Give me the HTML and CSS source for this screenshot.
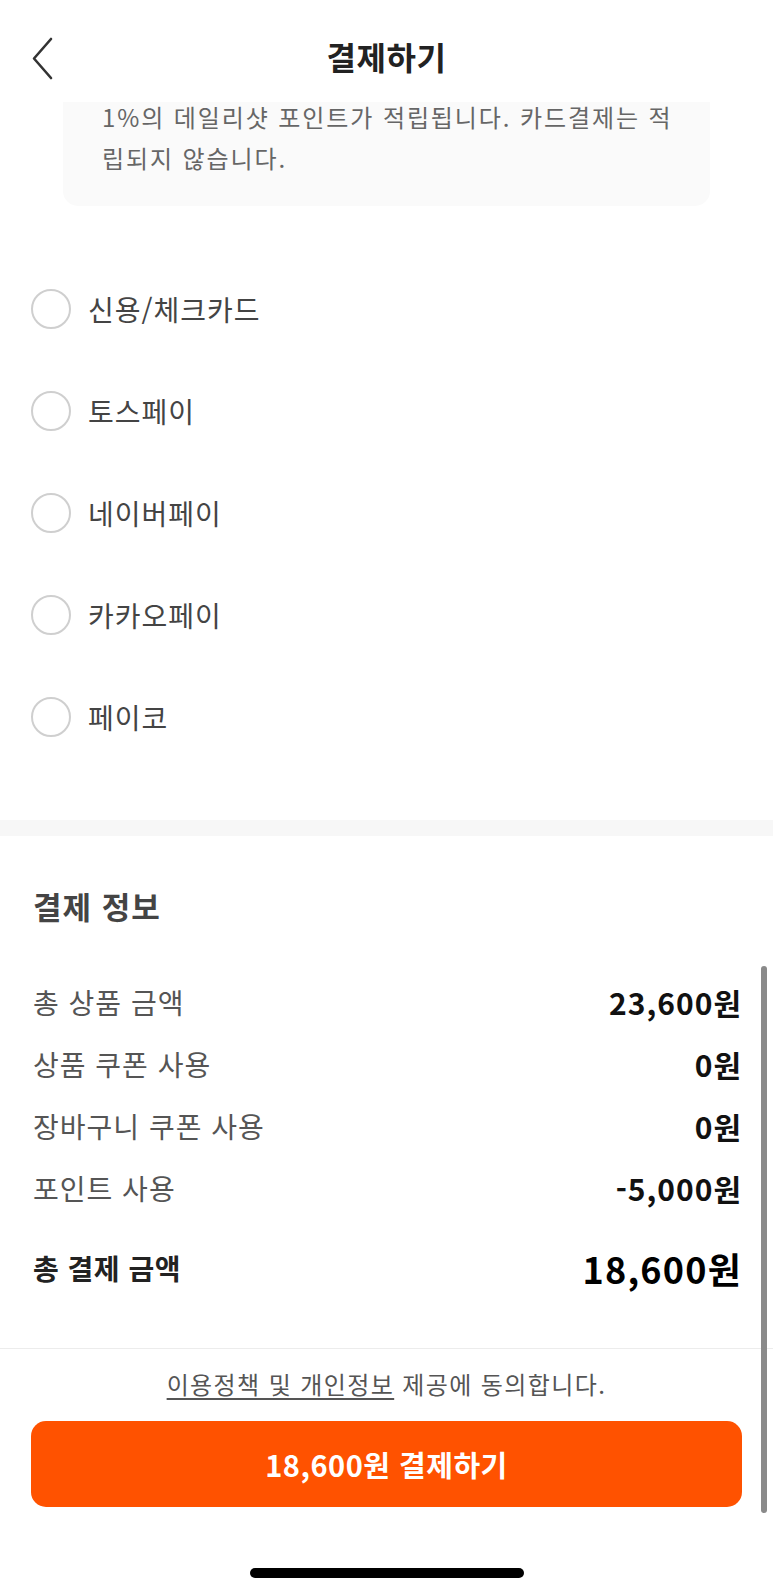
FILE: index.html
```html
<!DOCTYPE html>
<html lang="ko">
<head>
<meta charset="utf-8">
<title>결제하기</title>
<link rel="stylesheet" href="styles.css">
</head>
<body>
<div class="page">
  <header class="topbar">
    <svg class="back" width="24" height="44" viewBox="0 0 24 44">
      <path d="M20 2 L3 21.5 L20 41" fill="none" stroke="#333" stroke-width="2.6" stroke-linecap="round" stroke-linejoin="round"/>
    </svg>
    <h1 class="title">결제하기</h1>
  </header>

  <div class="notice">
    <p>1%의 데일리샷 포인트가 적립됩니다. 카드결제는 적<br>립되지 않습니다.</p>
  </div>

  <ul class="methods">
    <li class="method"><span class="radio"></span><span class="method-label">신용/체크카드</span></li>
    <li class="method"><span class="radio"></span><span class="method-label">토스페이</span></li>
    <li class="method"><span class="radio"></span><span class="method-label">네이버페이</span></li>
    <li class="method"><span class="radio"></span><span class="method-label">카카오페이</span></li>
    <li class="method"><span class="radio"></span><span class="method-label">페이코</span></li>
  </ul>

  <div class="band"></div>

  <section class="summary">
    <h2 class="summary-title">결제 정보</h2>
    <div class="row"><span class="row-label">총 상품 금액</span><span class="row-value">23,600원</span></div>
    <div class="row"><span class="row-label">상품 쿠폰 사용</span><span class="row-value">0원</span></div>
    <div class="row"><span class="row-label">장바구니 쿠폰 사용</span><span class="row-value">0원</span></div>
    <div class="row"><span class="row-label">포인트 사용</span><span class="row-value">-5,000원</span></div>
    <div class="row total"><span class="row-label">총 결제 금액</span><span class="row-value">18,600원</span></div>
  </section>

  <footer class="footer">
    <p class="agree"><span class="link">이용정책 및 개인정보</span> 제공에 동의합니다.</p>
    <button class="pay">18,600원 결제하기</button>
    <div class="home-bar"></div>
  </footer>

  <div class="scrollbar"></div>
</div>
</body>
</html>
```

FILE: styles.css
```css
* { box-sizing: border-box; }
html, body { margin: 0; padding: 0; background: #fff; }
body {
  font-family: "Noto Sans CJK KR", "Noto Sans", sans-serif;
  color: #222;
}
.page {
  position: relative;
  width: 773px;
  height: 1587px;
  overflow: hidden;
}
.topbar {
  position: relative;
  z-index: 2;
  height: 102px;
  background: #fff;
  padding-top: 13px;
}
.topbar .back {
  position: absolute;
  left: 31px;
  top: 37px;
}
.title {
  margin: 0;
  height: 86px;
  line-height: 86px;
  text-align: center;
  font-size: 32px;
  font-weight: 700;
  letter-spacing: 0.5px;
  color: #222;
}
.notice {
  position: relative;
  z-index: 1;
  margin: -20px 63px 0 63px;
  background: #fafafa;
  border-radius: 0 0 15px 15px;
  padding: 14px 0 28px 39px;
}
.notice p {
  margin: 0;
  font-size: 24px;
  letter-spacing: 1.9px;
  line-height: 41px;
  color: #666;
  white-space: nowrap;
}
.methods {
  list-style: none;
  margin: 52px 0 0 0;
  padding: 0;
}
.method {
  display: flex;
  align-items: center;
  height: 102px;
  padding-left: 31px;
  gap: 17px;
}
.radio {
  width: 40px;
  height: 40px;
  border-radius: 50%;
  border: 2px solid #cfcfcf;
  flex: none;
}
.method-label {
  font-size: 28px;
  letter-spacing: 1px;
  color: #444;
}
.band {
  margin-top: 52px;
  height: 16px;
  background: #f7f7f7;
}
.summary {
  padding: 50px 32px 0 33px;
}
.summary-title {
  margin: 0 0 45px 0;
  font-size: 31px;
  letter-spacing: 1px;
  line-height: 40px;
  font-weight: 700;
  color: #444;
}
.row {
  display: flex;
  justify-content: space-between;
  align-items: center;
  height: 62px;
}
.row-label {
  font-size: 28px;
  letter-spacing: 1px;
  color: #555;
}
.row-value {
  font-size: 30px;
  letter-spacing: 1px;
  margin-right: -1px;
  font-weight: 700;
  color: #111;
}
.row.total {
  margin-top: 18px;
}
.row.total .row-label {
  font-weight: 700;
  letter-spacing: 0.5px;
  color: #222;
}
.row.total .row-value {
  font-size: 36px;
  letter-spacing: 1.2px;
  color: #000;
}
.footer {
  margin-top: 49px;
  border-top: 1px solid #ececec;
  padding: 18px 31px 0 31px;
}
.agree {
  margin: 0;
  text-align: center;
  font-size: 24px;
  letter-spacing: 1.4px;
  line-height: 34px;
  color: #555;
}
.agree .link {
  text-decoration: underline;
  text-underline-offset: 4px;
}
.pay {
  display: block;
  width: 711px;
  height: 86px;
  margin-top: 20px;
  border: none;
  border-radius: 15px;
  background: #ff5200;
  color: #fff;
  font-family: inherit;
  font-size: 29px;
  letter-spacing: 0.5px;
  font-weight: 700;
}
.home-bar {
  width: 274px;
  height: 10px;
  margin: 61px auto 0 auto;
  background: #000;
  border-radius: 5px;
}
.scrollbar {
  position: absolute;
  left: 761px;
  top: 966px;
  width: 6px;
  height: 547px;
  border-radius: 3px;
  background: #8a8a8a;
}
```
